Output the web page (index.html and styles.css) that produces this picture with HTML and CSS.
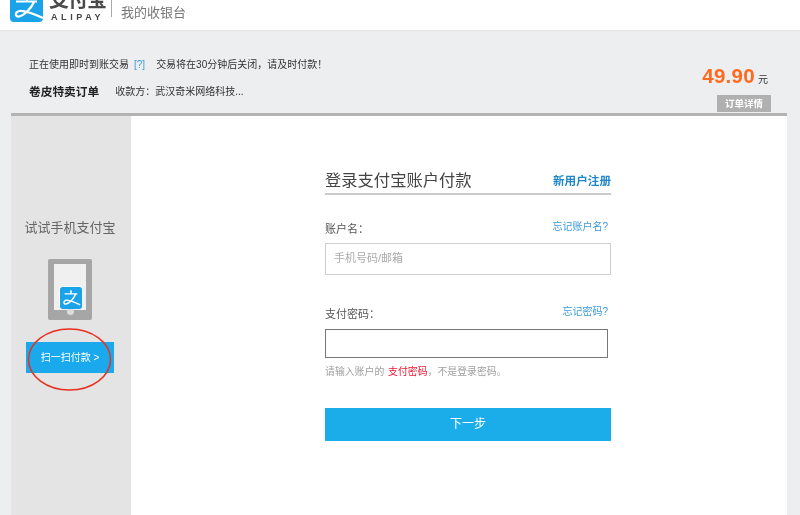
FILE: index.html
```html
<!DOCTYPE html>
<html lang="zh">
<head>
<meta charset="utf-8">
<title>我的收银台</title>
<link rel="stylesheet" href="styles.css">
</head>
<body>
<header class="topbar">
  <svg class="logo-mark" viewBox="0 0 33 33" width="33" height="33">
    <rect width="33" height="33" rx="4" fill="#1aa3e8"/>
    <path d="M6 12.500H27M17 4V12.500M24 13C21 20 13 27 9 27.500C4.500 28 5 22.500 9.500 22C15 21 24 25 33 29" fill="none" stroke="#fff" stroke-width="2.200"/>
  </svg>
  <div class="brand">
    <div class="brand-cn">支付宝</div>
    <div class="brand-en">ALIPAY</div>
  </div>
  <div class="divider"></div>
  <div class="cashier">我的收银台</div>
</header>
<section class="order">
  <div class="order-left">
    <p class="notice"><span>正在使用即时到账交易</span><span class="help">[?]</span><span>交易将在30分钟后关闭，请及时付款！</span></p>
    <p class="order-line"><strong>卷皮特卖订单</strong><span>收款方：武汉奇米网络科技...</span></p>
  </div>
  <div class="order-right">
    <p class="price"><strong>49.90</strong> <span>元</span></p>
    <div class="detail-tab">订单详情</div>
  </div>
</section>
<main class="panel">
  <aside class="side">
    <h2>试试手机支付宝</h2>
    <div class="phone">
      <div class="screen"></div>
      <div class="phone-notch"></div>
      <div class="phone-badge">
        <svg viewBox="0 0 24 24" width="22" height="22">
          <rect width="24" height="24" rx="3" fill="#1aa3e8"/>
          <path d="M5 7.500H19M12 3.500V7.500M17 8C15 13 10 18 6.500 18.500C3.500 19 3.500 15 7 14.500C11 14 16 17 22 19.500" fill="none" stroke="#fff" stroke-width="1.600"/>
        </svg>
      </div>
    </div>
    <div class="scan-btn">扫一扫付款 &gt;</div>
  </aside>
  <div class="content">
    <div class="form">
      <div class="form-head">
        <h1>登录支付宝账户付款</h1>
        <span class="register">新用户注册</span>
      </div>
      <div class="label-row account-label"><span>账户名：</span><span class="forgot">忘记账户名?</span></div>
      <div class="field field-account">手机号码/邮箱</div>
      <div class="label-row password-label"><span>支付密码：</span><span class="forgot">忘记密码?</span></div>
      <div class="field field-password"></div>
      <p class="hint">请输入账户的 <em>支付密码</em>，不是登录密码。</p>
      <div class="next-btn">下一步</div>
    </div>
  </div>
</main>
<svg class="annotation" width="114" height="68" viewBox="0 0 114 68">
  <ellipse cx="56.500" cy="33.500" rx="41" ry="30.500" fill="none" stroke="#e8301f" stroke-width="1.500"/>
</svg>
</body>
</html>
```
FILE: styles.css
```css
* { box-sizing: border-box; }
html, body { margin: 0; padding: 0; }
body {
  position: relative;
  width: 800px;
  height: 515px;
  overflow: hidden;
  background: #edeef0;
  font-family: "Liberation Sans", "Noto Sans CJK SC", sans-serif;
  color: #333;
  filter: blur(0.35px);
}
p, h1, h2 { margin: 0; font-weight: normal; }

.topbar {
  height: 30px;
  background: #fff;
  display: flex;
  align-items: flex-end;
  overflow: hidden;
  padding-left: 10px;
  box-shadow: 0 1px 2px #e2e2e2;
}
.logo-mark { flex: none; margin-bottom: 8px; }
.brand { width: 59px; margin-left: 6px; height: 30px; flex: none; }
.brand-cn {
  font-size: 20px; line-height: 20px; font-weight: bold; color: #4a4a4a;
  margin-top: -10px; letter-spacing: -1px;
}
.brand-en { font-size: 9px; line-height: 10px; letter-spacing: 3.600px; color: #444; margin-top: 2px; padding-left: 2px; font-weight: bold; }
.divider { width: 1px; height: 17px; background: #aaa; margin: 0 9px 13px 3px; flex: none; }
.cashier { font-size: 13px; line-height: 18px; color: #777; margin-bottom: 8px; }

.order {
  height: 83px;
  display: flex;
  justify-content: space-between;
  padding: 28px 29px 0 29px;
}
.notice { font-size: 10px; line-height: 14px; color: #333; display: flex; }
.help { color: #3b9ad9; margin: 0 11px 0 5px; }
.order-line { display: flex; align-items: center; margin-top: 12px; font-size: 10px; line-height: 16px; }
.order-line strong { font-size: 11.700px; color: #222; margin-right: 16px; }
.order-right { display: flex; flex-direction: column; align-items: flex-end; padding-top: 7px; }
.price { font-size: 10px; line-height: 22px; white-space: nowrap; display: flex; align-items: baseline; gap: 3px; margin-right: 3px; }
.price strong { font-size: 20.500px; letter-spacing: 0.300px; color: #ff6a1f; }
.detail-tab {
  width: 54px; height: 17px; background: #b0b0b0; color: #fff;
  font-size: 9.500px; line-height: 17px; text-align: center; font-weight: bold;
  margin-top: 4px;
}

.panel {
  margin: 0 13px 0 11px;
  height: 402px;
  border-top: 3px solid #b3b3b3;
  display: flex;
  background: #fff;
}
.side {
  width: 120px;
  flex: none;
  background: #e4e4e4;
  display: flex;
  flex-direction: column;
  align-items: center;
  padding-right: 2px;
}
.side h2 { font-size: 13px; line-height: 18px; color: #666; margin-top: 103px; }
.phone {
  position: relative;
  width: 44px; height: 61px;
  margin-top: 22px;
  background: #a6a6a6;
  border-radius: 2px;
  padding: 5px 6px 10px 6px;
}
.screen { background: #f0f0f0; height: 100%; }
.phone-notch { position: absolute; left: 19px; bottom: 5px; width: 7px; height: 7px; background: #dcdcdc; border-radius: 50%; }
.phone-badge { position: absolute; left: 11px; top: 27px; width: 23px; height: 23px; background: #fff; border-radius: 4px; padding: 0.500px; }
.phone-badge svg { display: block; }
.scan-btn {
  width: 88px; height: 31px;
  margin-top: 22px;
  background: #1aa9ec;
  color: #fff;
  font-size: 10px;
  line-height: 31px;
  text-align: center;
}

.content { flex: 1; padding-left: 194px; }
.form { width: 286px; }
.form-head {
  height: 29px;
  margin-top: 50px;
  border-bottom: 2px solid #c9c9c9;
  display: flex;
  justify-content: space-between;
  align-items: flex-end;
}
.form-head h1 { font-size: 16.300px; line-height: 26px; color: #444; }
.register { font-size: 11.600px; font-weight: bold; color: #1f86c9; line-height: 24px; }
.label-row { display: flex; justify-content: space-between; font-size: 11px; color: #555; line-height: 16px; }
.account-label { margin-top: 26px; padding-right: 3px; }
.password-label { margin-top: 31px; padding-right: 3px; }
.forgot { font-size: 10px; color: #3b9ad9; margin-top: -2px; }
.field { border: 1px solid; background: #fff; }
.field-account {
  margin-top: 6px;
  height: 32px;
  border-color: #d0d0d0;
  font-size: 11px;
  line-height: 29px;
  color: #aaa;
  padding-left: 8px;
}
.field-password { margin-top: 7px; width: 283px; height: 29px; border-color: #777; }
.hint { font-size: 9.900px; line-height: 14px; color: #a0a0a0; margin-top: 7px; }
.hint em { font-style: normal; color: #f0142f; margin-left: 1px; }
.next-btn {
  margin-top: 29px;
  height: 33px;
  background: #1bade9;
  color: #fff;
  font-size: 12px;
  line-height: 32px;
  text-align: center;
}

.annotation { position: absolute; left: 13px; top: 326px; }
```
